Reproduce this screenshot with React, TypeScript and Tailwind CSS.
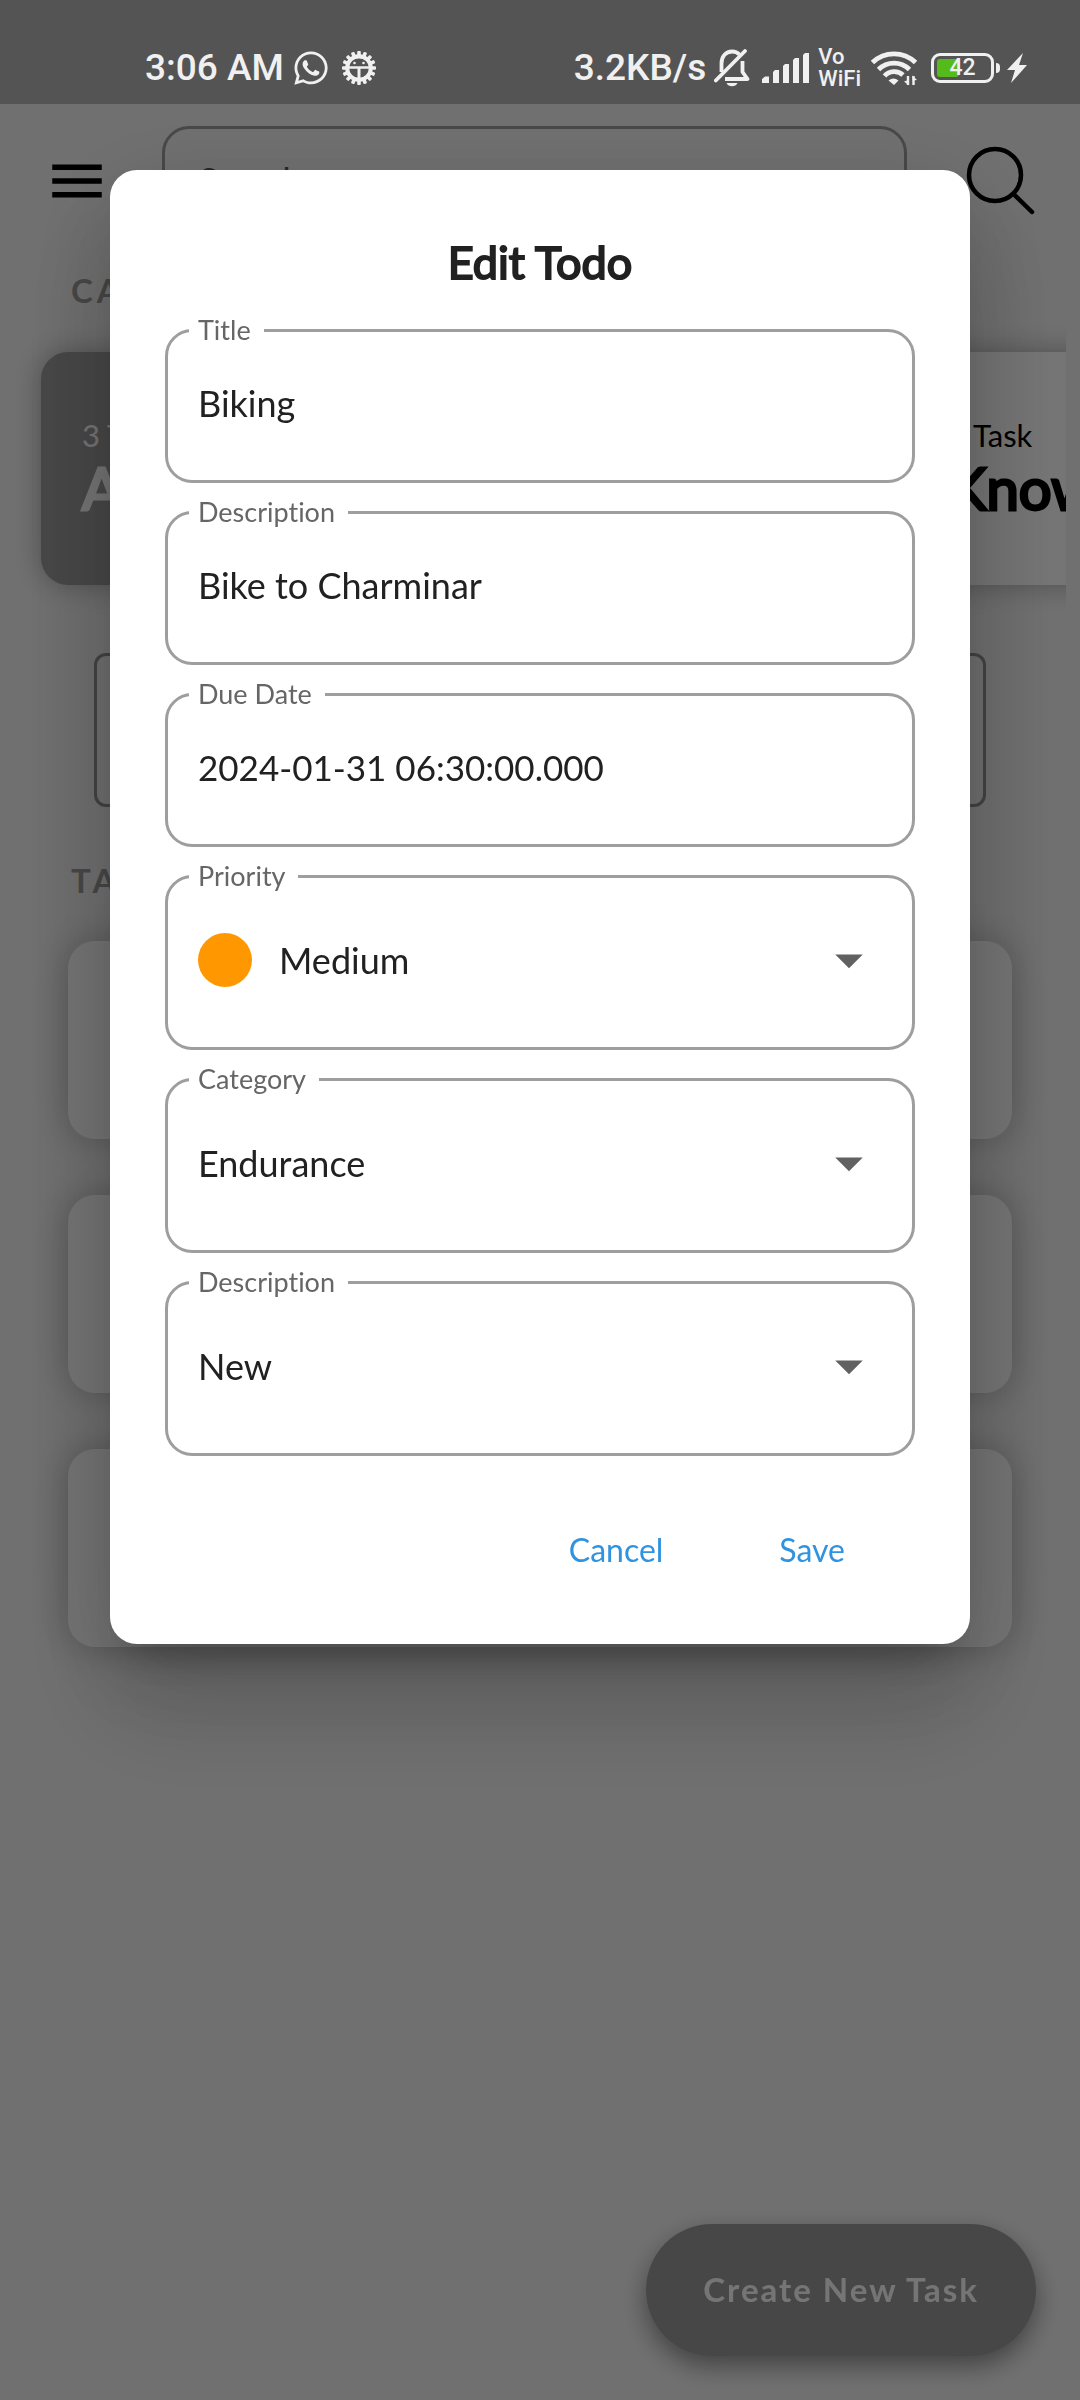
import { useState } from "react";
import type { ReactNode } from "react";
import { FaWhatsapp } from "react-icons/fa";

function GearBugIcon() {
  const teeth = Array.from({ length: 16 }, (_, i) => i * 22.5);
  return (
    <svg viewBox="0 0 34 34" className="size-[34px]" aria-hidden="true">
      {teeth.map((a) => (
        <rect key={a} x="15.2" y="0" width="3.6" height="6" rx="1" fill="#f0f0f0" transform={`rotate(${a} 17 17)`} />
      ))}
      <circle cx="17" cy="17" r="11.8" fill="none" stroke="#f0f0f0" strokeWidth="4" />
      <path d="M7 11.500Q17 3 27 11.500L26 8Q17 2 8 8z" fill="#f0f0f0" />
      <circle cx="12.5" cy="12" r="1.300" fill="#f0f0f0" />
      <circle cx="21.500" cy="12" r="1.300" fill="#f0f0f0" />
      <path d="M4 15.200h26v2.600H4zM15.500 17h3v13h-3z" fill="#f0f0f0" />
    </svg>
  );
}

function BellOffIcon() {
  return (
    <svg viewBox="0 0 36 38" className="h-[38px] w-9" fill="none" stroke="#f0f0f0" strokeWidth="3.800" aria-hidden="true">
      <path d="M7.500 23V14.500C7.500 7 12 2.500 18 2.500c3 0 5.500 1 7.300 3" />
      <path d="M28.500 12v11l5 7H11" strokeLinejoin="round" />
      <path d="M1.800 31.500L31 2" strokeLinecap="round" />
      <path d="M12.500 34h11c-1 2.400-3 3.200-5.500 3.200s-4.500-.8-5.500-3.200z" fill="#f0f0f0" stroke="none" />
    </svg>
  );
}

function SignalIcon() {
  return (
    <svg viewBox="0 0 48 30" className="h-[30px] w-12" fill="#f0f0f0" aria-hidden="true">
      <path d="M0 30v-4l3-2.500h4V30zM11 30V19l2-2h4v13zM21 30V13l2-2h4v19zM31 30V7l2-2h4v25zM41 30V2l2-2h4v30z" />
    </svg>
  );
}

function WifiIcon() {
  return (
    <svg viewBox="0 0 46 36" className="h-9 w-[46px]" fill="none" stroke="#f0f0f0" strokeWidth="4.800" aria-hidden="true">
      <path d="M1.500 12.500a31 31 0 0 1 43 0" />
      <path d="M7.500 19.500a22 22 0 0 1 31 0" />
      <path d="M13.500 26a13 13 0 0 1 18.500-1" />
      <path d="M17.500 30.500a8 8 0 0 1 10 0L23 35z" fill="#f0f0f0" stroke="none" />
      <path d="M37 26v9M42.500 26v9" strokeWidth="2.400" />
      <path d="M33 31.500l4.500 3.500v-5zM46 30l-4.500-4.500v5z" fill="#f0f0f0" stroke="none" />
    </svg>
  );
}

function StatusBar() {
  return (
    <header className="relative z-20 flex h-[104px] items-center bg-[#545454] pt-8 pr-[53px] pl-[145px] font-[Roboto,sans-serif] text-[37px] leading-10 font-medium text-[#f0f0f0]">
      <div className="flex h-10 items-center">
        <span>3:06 AM</span>
        <FaWhatsapp className="ml-2 size-[38px]" aria-hidden="true" />
        <span className="ml-3">
          <GearBugIcon />
        </span>
      </div>
      <div className="ml-auto flex h-10 items-center">
        <span>3.2KB/s</span>
        <span className="ml-2">
          <BellOffIcon />
        </span>
        <span className="ml-3">
          <SignalIcon />
        </span>
        <span className="ml-2 flex flex-col text-[22px] leading-[22px]">
          <span>Vo</span>
          <span>WiFi</span>
        </span>
        <span className="ml-2.5">
          <WifiIcon />
        </span>
        <span className="ml-3.5 flex items-center">
          <span className="relative flex h-[30px] w-[63px] items-center justify-center rounded-[9px] border-3 border-[#f0f0f0] text-[23px] leading-6 font-medium">
            <span className="absolute top-[3px] left-[3px] h-[18px] w-[22px] rounded-[3px] bg-[#55bb1b]" />
            <span className="relative">42</span>
          </span>
          <span className="ml-0.5 h-2.5 w-1 rounded-r bg-[#f0f0f0]" />
        </span>
        <svg viewBox="0 0 20 30" className="ml-[7px] h-[30px] w-5" fill="#f0f0f0" aria-hidden="true">
          <path d="M16 0L0 17h8L4 30 20 12h-8z" />
        </svg>
      </div>
    </header>
  );
}

function CategoryCard({ count, name, active }: { count: string; name: string; active?: boolean }) {
  return (
    <article
      className={
        active
          ? "flex w-[405px] shrink-0 flex-col justify-center rounded-[27px] bg-[#9c9c9c] px-[41px] pt-[3px] text-white shadow-[0_0_28px_rgba(0,0,0,0.3)]"
          : "flex w-[405px] shrink-0 flex-col justify-center rounded-[27px] bg-white px-[41px] pt-[3px] text-black shadow-[0_0_28px_rgba(0,0,0,0.3)]"
      }
    >
      <p className="text-[31px] leading-9">{count}</p>
      <h3 className="text-[58px] leading-[70px] [-webkit-text-stroke:3px_currentColor]">{name}</h3>
    </article>
  );
}

function Field({ id, label, tall, children }: { id: string; label: string; tall?: boolean; children: ReactNode }) {
  return (
    <fieldset className="min-w-0 rounded-[27px] border-3 border-[#9e9e9e] pr-[30px] pl-[21px]">
      <legend className="h-[35px] pr-[13px] pl-[9px] text-[27px] leading-[33px] text-[#666666]">
        <label htmlFor={id}>{label}</label>
      </legend>
      <div
        className={
          tall ? "-mt-4 flex h-[169px] items-center pb-1.5 pl-[9px]" : "-mt-4 flex h-[148px] items-center pb-1.5 pl-[9px]"
        }
      >
        {children}
      </div>
    </fieldset>
  );
}

function TextField({ id, label, initial, numeric }: { id: string; label: string; initial: string; numeric?: boolean }) {
  const [value, setValue] = useState(initial);
  return (
    <Field id={id} label={label}>
      <input
        id={id}
        type="text"
        value={value}
        onChange={(e) => setValue(e.target.value)}
        className={
          numeric
            ? "w-full min-w-0 bg-transparent text-[35px] leading-[44px] text-[#212121] outline-none"
            : "w-full min-w-0 bg-transparent text-[36px] leading-[44px] text-[#212121] outline-none"
        }
      />
    </Field>
  );
}

function SelectField({
  id,
  label,
  options,
  initial,
  dot,
}: {
  id: string;
  label: string;
  options: string[];
  initial: string;
  dot?: boolean;
}) {
  const [value, setValue] = useState(initial);
  return (
    <Field id={id} label={label} tall>
      {dot && <span className="mr-[27px] size-[54px] shrink-0 rounded-full bg-[#ff9800]" />}
      <div className="grid min-w-0 flex-1 items-center">
        <select
          id={id}
          value={value}
          onChange={(e) => setValue(e.target.value)}
          className="col-start-1 row-start-1 h-[66px] w-full appearance-none bg-transparent text-[36px] leading-[44px] text-[#212121] outline-none"
        >
          {options.map((o) => (
            <option key={o}>{o}</option>
          ))}
        </select>
        <svg
          viewBox="0 0 24 24"
          className="pointer-events-none col-start-1 row-start-1 size-[66px] justify-self-end"
          fill="#616161"
          aria-hidden="true"
        >
          <path d="M7 10l5 5 5-5z" />
        </svg>
      </div>
    </Field>
  );
}

function EditDialog() {
  return (
    <div className="fixed inset-0 z-10 flex items-start justify-center bg-black/54 px-[110px] pt-[170px]">
      <form
        role="dialog"
        aria-labelledby="dialog-title"
        onSubmit={(e) => e.preventDefault()}
        className="w-full rounded-[27px] bg-white px-[55px] pt-16 pb-7 shadow-[0_30px_41px_-19px_rgba(0,0,0,0.2),0_66px_104px_8px_rgba(0,0,0,0.14),0_25px_100px_8px_rgba(0,0,0,0.12)]"
      >
        <h1
          id="dialog-title"
          className="text-center text-[45px] leading-[56px] text-[#212121] [-webkit-text-stroke:2px_#212121]"
        >
          Edit Todo
        </h1>
        <div className="mt-[23px] flex flex-col gap-3">
          <TextField id="title" label="Title" initial="Biking" />
          <TextField id="description" label="Description" initial="Bike to Charminar" />
          <TextField id="due" label="Due Date" initial="2024-01-31 06:30:00.000" numeric />
          <SelectField id="priority" label="Priority" initial="Medium" options={["Low", "Medium", "High"]} dot />
          <SelectField id="category" label="Category" initial="Endurance" options={["Endurance", "Knowledge"]} />
          <SelectField id="status" label="Description" initial="New" options={["New", "Done"]} />
        </div>
        <div className="mt-7 flex justify-end pr-3 text-[32px] leading-10 text-[#2f93e0]">
          <button type="button" className="h-[132px] px-[58px]">
            Cancel
          </button>
          <button type="submit" className="h-[132px] px-[58px]">
            Save
          </button>
        </div>
      </form>
    </div>
  );
}

export default function App() {
  return (
    <div className="min-h-screen overflow-hidden bg-[#f4f4f4] font-[Lato,sans-serif] [font-variant-ligatures:none]">
      <StatusBar />
      <main>
        <div className="flex items-center px-11 pt-[22px]">
          <button type="button" aria-label="Menu" className="shrink-0">
            <svg viewBox="0 0 24 24" className="size-[66px]" aria-hidden="true">
              <path d="M3 18h18v-2H3v2zm0-5h18v-2H3v2zm0-7v2h18V6H3z" />
            </svg>
          </button>
          <input
            type="search"
            aria-label="Search"
            placeholder="Search"
            className="mr-[59px] ml-[52px] h-[110px] min-w-0 flex-1 rounded-[27px] border-3 border-[#9e9e9e] bg-transparent px-[34px] pb-1 text-[35px] leading-[44px] placeholder:text-[#555555]"
          />
          <button type="button" aria-label="Search tasks" className="shrink-0">
            <svg viewBox="0 0 70 70" className="size-[70px]" fill="none" stroke="#000" strokeWidth="4.500" aria-hidden="true">
              <circle cx="29" cy="29" r="26" />
              <path d="M48 48.500L66 66" strokeLinecap="round" />
            </svg>
          </button>
        </div>

        <h2 className="mt-[34px] pl-[71px] text-[33px] leading-10 font-bold tracking-[4px] text-[#9c9c9c]">CATEGORIES</h2>
        <section className="mx-3.5 overflow-hidden pt-[42px] pb-10 pl-[27px]">
          <div className="flex h-[233px] gap-7">
            <CategoryCard count="3 Tasks" name="All" active />
            <CategoryCard count="1 Task" name="Endurance" />
            <CategoryCard count="1 Task" name="Knowledge" />
          </div>
        </section>

        <div className="mx-[94px] mt-7 h-[154px] rounded-xl border-3 border-[#939393]" />

        <h2 className="mt-[53px] pl-[71px] text-[33px] leading-10 font-bold tracking-[4px] text-[#9c9c9c]">TASKS</h2>
        <ul className="mx-[68px] mt-[41px] flex flex-col gap-14">
          <li className="h-[198px] rounded-[27px] bg-white shadow-[0_0_36px_rgba(0,0,0,0.25)]" />
          <li className="h-[198px] rounded-[27px] bg-white shadow-[0_0_36px_rgba(0,0,0,0.25)]" />
          <li className="h-[198px] rounded-[27px] bg-white shadow-[0_0_36px_rgba(0,0,0,0.25)]" />
        </ul>
      </main>

      <button
        type="button"
        className="fixed right-11 bottom-11 h-[132px] rounded-full bg-[#9c9c9c] px-[57px] pb-0.5 text-[33px] leading-10 font-bold tracking-[2px] text-white shadow-[0_10px_24px_rgba(0,0,0,0.4)]"
      >
        Create New Task
      </button>

      <EditDialog />
    </div>
  );
}
